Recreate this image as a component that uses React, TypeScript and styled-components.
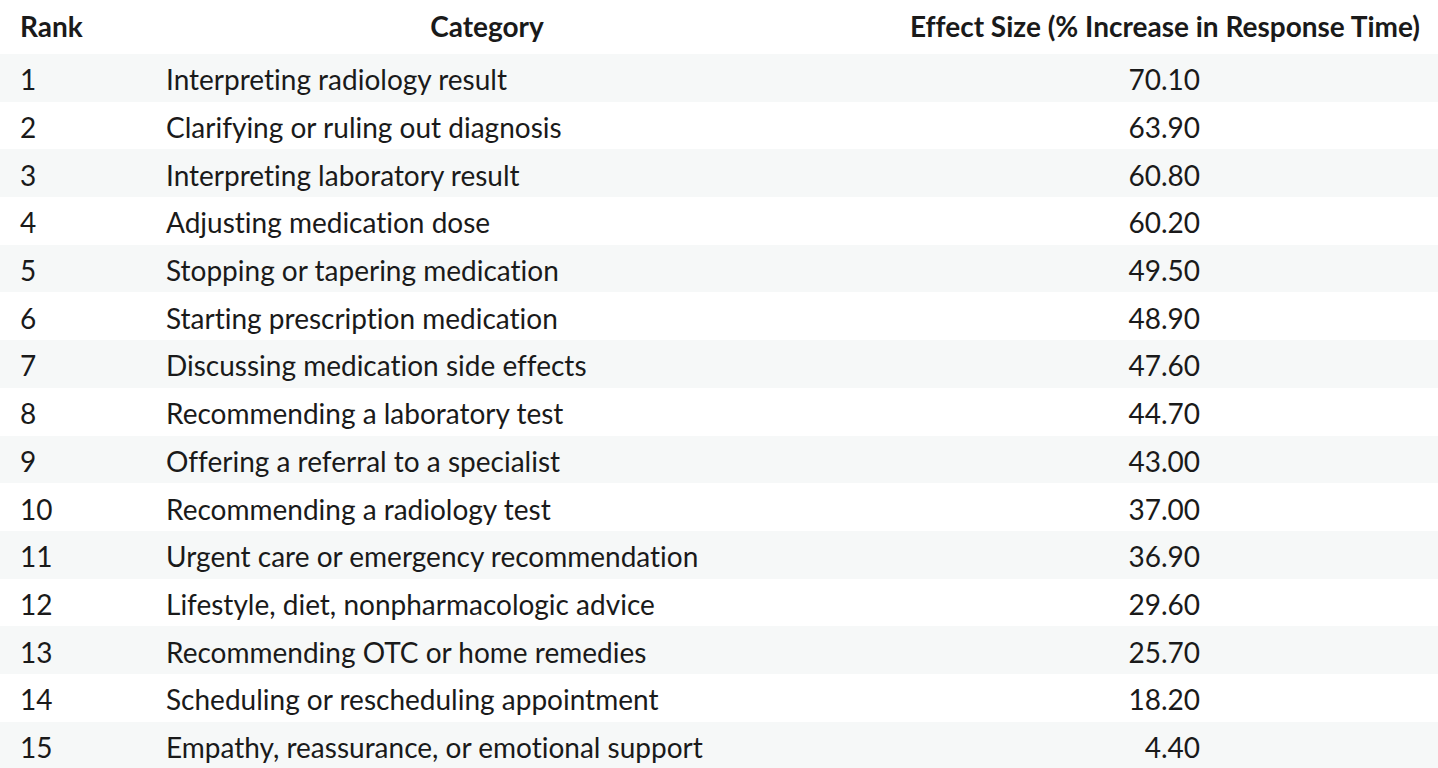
import styled, { createGlobalStyle } from 'styled-components';

const GlobalStyle = createGlobalStyle`
  html, body {
    margin: 0;
    padding: 0;
    background: #ffffff;
  }
  body {
    font-family: Lato, 'Noto Sans', sans-serif;
    color: #1a1a1a;
    font-variant-ligatures: no-common-ligatures;
  }
`;

const rows = [
  { rank: 1, category: 'Interpreting radiology result', effect: '70.10' },
  { rank: 2, category: 'Clarifying or ruling out diagnosis', effect: '63.90' },
  { rank: 3, category: 'Interpreting laboratory result', effect: '60.80' },
  { rank: 4, category: 'Adjusting medication dose', effect: '60.20' },
  { rank: 5, category: 'Stopping or tapering medication', effect: '49.50' },
  { rank: 6, category: 'Starting prescription medication', effect: '48.90' },
  { rank: 7, category: 'Discussing medication side effects', effect: '47.60' },
  { rank: 8, category: 'Recommending a laboratory test', effect: '44.70' },
  { rank: 9, category: 'Offering a referral to a specialist', effect: '43.00' },
  { rank: 10, category: 'Recommending a radiology test', effect: '37.00' },
  { rank: 11, category: 'Urgent care or emergency recommendation', effect: '36.90' },
  { rank: 12, category: 'Lifestyle, diet, nonpharmacologic advice', effect: '29.60' },
  { rank: 13, category: 'Recommending OTC or home remedies', effect: '25.70' },
  { rank: 14, category: 'Scheduling or rescheduling appointment', effect: '18.20' },
  { rank: 15, category: 'Empathy, reassurance, or emotional support', effect: '4.40' },
];

const Table = styled.div`
  width: 1438px;
  display: flex;
  flex-direction: column;
`;

const HeaderRow = styled.div`
  display: grid;
  grid-template-columns: 146px 682px 1fr;
  align-items: center;
  height: 54px;
  padding-bottom: 2px;
  box-sizing: border-box;
  font-weight: 700;
  font-size: 28px;
`;

const Row = styled.div<{ $striped: boolean }>`
  display: grid;
  grid-template-columns: 146px 682px 1fr;
  align-items: center;
  height: 47.7px;
  padding-top: 3px;
  box-sizing: border-box;
  font-size: 28px;
  background: ${(p) => (p.$striped ? '#f6f8f8' : '#ffffff')};
`;

const RankCell = styled.div`
  padding-left: 20px;
`;

const HeadCategory = styled.div`
  text-align: center;
`;

const HeadEffect = styled.div`
  text-align: right;
  padding-right: 18px;
  white-space: nowrap;
`;

const CategoryCell = styled.div`
  padding-left: 20px;
`;

const EffectCell = styled.div`
  text-align: right;
  padding-right: 238px;
`;

export default function App() {
  return (
    <>
      <GlobalStyle />
      <Table>
        <HeaderRow>
          <RankCell>Rank</RankCell>
          <HeadCategory>Category</HeadCategory>
          <HeadEffect>Effect Size (% Increase in Response Time)</HeadEffect>
        </HeaderRow>
        {rows.map((r, i) => (
          <Row key={r.rank} $striped={i % 2 === 0}>
            <RankCell>{r.rank}</RankCell>
            <CategoryCell>{r.category}</CategoryCell>
            <EffectCell>{r.effect}</EffectCell>
          </Row>
        ))}
      </Table>
    </>
  );
}
